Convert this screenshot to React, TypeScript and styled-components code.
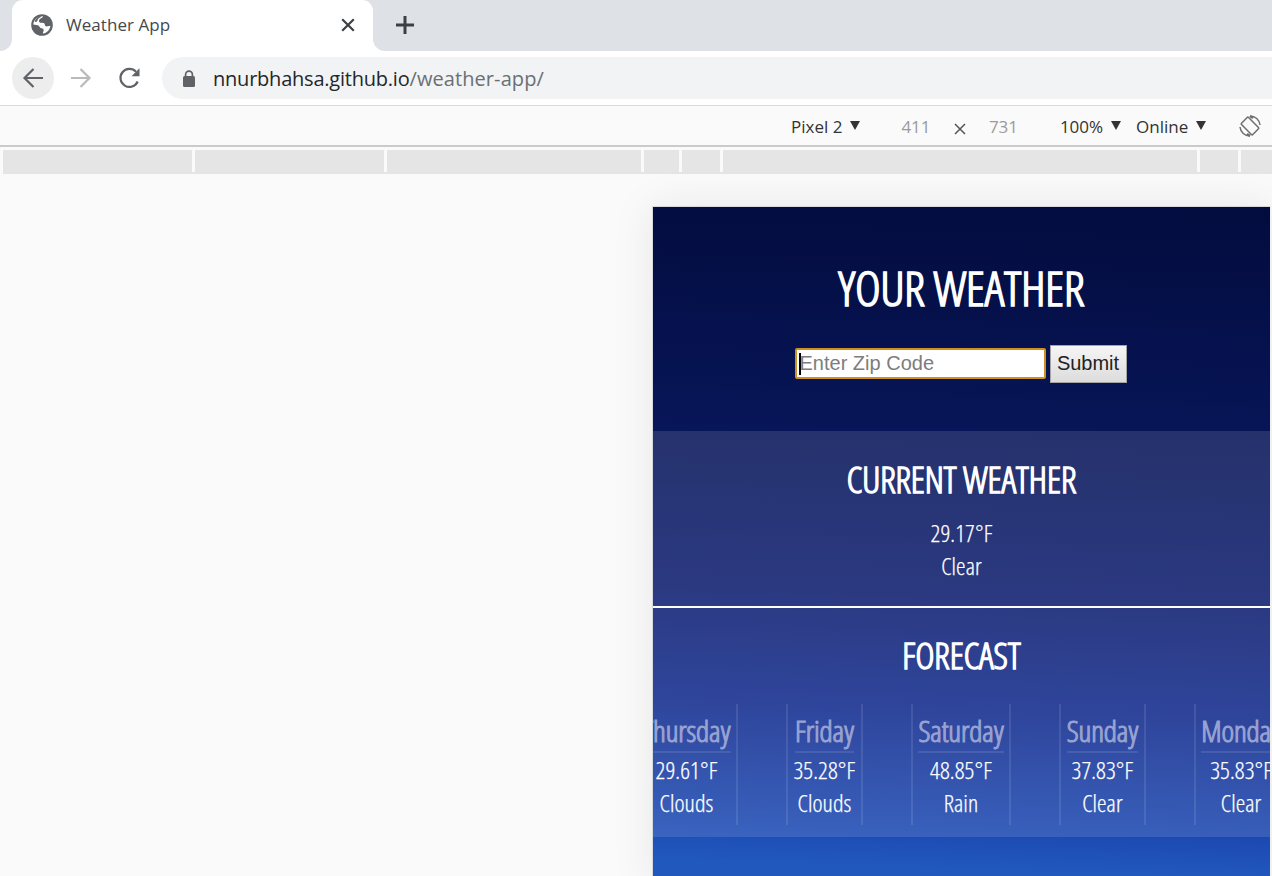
import React from "react";
import styled, { createGlobalStyle } from "styled-components";

const GlobalStyle = createGlobalStyle`
  * { box-sizing: border-box; }
  body {
    margin: 0;
    overflow: hidden;
    background: #fafafa;
    font-family: "Open Sans", "Noto Sans", sans-serif;
  }
`;

const Browser = styled.div`
  display: flex;
  flex-direction: column;
  width: 1272px;
  height: 876px;
  overflow: hidden;
`;

const TabStrip = styled.div`
  display: flex;
  height: 51px;
  background: #fff;
`;

const StripStart = styled.div`
  width: 12px;
  background: #dee1e6;
  border-bottom-right-radius: 12px;
`;

const TabSlot = styled.div`
  width: 361px;
  background: #dee1e6;
  height: 40px;
`;

const Tab = styled.div`
  display: flex;
  align-items: center;
  height: 51px;
  padding: 0 17px 2px 18px;
  background: #fff;
  border-radius: 11px 11px 0 0;
`;

const TabTitle = styled.span`
  flex: 1;
  margin-left: 12px;
  font-size: 17px;
  line-height: 24px;
  letter-spacing: 0.05px;
  color: #45494d;
`;

const StripRest = styled.div`
  flex: 1;
  display: flex;
  align-items: center;
  padding: 0 0 2px 22px;
  background: #dee1e6;
  border-bottom-left-radius: 12px;
`;

const Toolbar = styled.div`
  display: flex;
  align-items: center;
  height: 55px;
  padding-left: 12px;
  background: #fff;
  border-bottom: 1px solid #d9dbde;
`;

const NavButton = styled.div<{ $active?: boolean }>`
  display: flex;
  align-items: center;
  justify-content: center;
  width: 42px;
  height: 42px;
  margin-right: 6px;
  border-radius: 50%;
  background: ${(p) => (p.$active ? "#ededed" : "transparent")};
`;

const AddressBar = styled.div`
  flex: 1;
  display: flex;
  align-items: center;
  height: 42px;
  margin-left: 6px;
  padding: 2px 0 0 20px;
  background: #f1f3f4;
  border-radius: 21px 0 0 21px;
`;

const Url = styled.div`
  margin-left: 17px;
  font-size: 20px;
  line-height: 28px;
  letter-spacing: 0.08px;
  color: #6b6f74;
`;

const Host = styled.span`
  color: #24272b;
  letter-spacing: -0.22px;
`;

const DeviceBar = styled.div`
  display: flex;
  align-items: center;
  height: 41px;
  padding: 2px 11px 0 791px;
  background: #fafafa;
  border-bottom: 2px solid #cbcbcb;
  font-size: 17px;
  line-height: 24px;
  color: #333;
`;

const Picker = styled.div<{ $before?: number; $after?: number }>`
  display: flex;
  align-items: center;
  margin-left: ${(p) => p.$before ?? 0}px;
  margin-right: ${(p) => p.$after ?? 0}px;
  white-space: nowrap;
`;

const Triangle = styled.i`
  margin: -3px 0 0 8px;
  border: solid transparent;
  border-width: 9.5px 5.5px 0;
  border-top-color: #333;
`;

const Dimension = styled.span`
  width: 29px;
  color: #9b9b9b;
`;

const Times = styled.span`
  display: flex;
  justify-content: center;
  width: 58.5px;
  padding-top: 4px;
`;

const RotateSlot = styled.div`
  display: flex;
  margin: -2px 0 0 auto;
`;

const Ruler = styled.div`
  display: flex;
  height: 24px;
  margin: 3px 0 0 3px;
  background: #e5e5e5;
`;

const RulerBlock = styled.div<{ $width: number }>`
  flex: none;
  width: ${(p) => p.$width}px;
  height: 22px;
  border-right: 3px solid #fafafa;
`;

const Stage = styled.main`
  flex: 1;
  padding: 32px 0 0 652px;
  min-height: 0;
`;

const Phone = styled.div`
  width: 619px;
  height: 680px;
  border: 1px solid #d5d8dc;
  border-right-color: #eef0f2;
  overflow: hidden;
  color: #fff;
  text-align: center;
  background: linear-gradient(182deg, #030c3e 0, #071557 224px, #0e1e70 400px, #132d90 520px, #1c48b0 628px, #2158be 672px);
  box-shadow: 0 0 40px rgba(0, 0, 0, 0.08);
  font-family: "Open Sans", sans-serif;
  font-stretch: 75%;
  font-weight: 300;
`;

const Header = styled.header`
  height: 224px;
  padding-top: 51px;
`;

const Title = styled.h1`
  margin: 0;
  font-size: 48px;
  line-height: 60px;
  font-weight: 300;
  -webkit-text-stroke: 1.7px #fff;
`;

const ZipForm = styled.form`
  display: flex;
  justify-content: center;
  align-items: flex-start;
  gap: 4px;
  margin: 27px 2px 0 0;
`;

const Field = styled.div`
  position: relative;
  display: flex;
  margin-top: 3px;
`;

const ZipInput = styled.input`
  width: 251px;
  height: 31px;
  padding: 0 0 0 3px;
  border: 2px solid #cf9020;
  border-radius: 2px;
  outline: none;
  background: #fff;
  font: 20px "Liberation Sans", Arial, sans-serif;
  &::placeholder { color: #7d7d7d; opacity: 1; }
`;

const Caret = styled.span`
  position: absolute;
  left: 4px;
  top: 5px;
  width: 2px;
  height: 22px;
  background: #000;
`;

const SubmitButton = styled.button`
  width: 77px;
  height: 38px;
  padding: 0 0 2px;
  border: 1px solid #a5a5a5;
  background: linear-gradient(#f6f6f6, #dcdcdc);
  color: #222;
  font: 20px "Liberation Sans", Arial, sans-serif;
`;

const Current = styled.section`
  height: 177px;
  padding-top: 24px;
  background: rgba(255, 255, 255, 0.12);
  background-clip: padding-box;
  border-bottom: 2px solid #fff;
`;

const Heading = styled.h2`
  margin: 0;
  font-size: 36px;
  line-height: 50px;
  font-weight: 300;
  -webkit-text-stroke: 1.4px #fff;
`;

const Reading = styled.p`
  margin: 0;
  font-size: 24px;
  line-height: 33px;
  letter-spacing: 0.1px;
  -webkit-text-stroke: 0.25px #fff;
`;

const CurrentReadings = styled.div`
  margin-top: 11px;
`;

const Forecast = styled.section`
  height: 229px;
  padding-top: 23px;
  background: rgba(255, 255, 255, 0.12);
`;

const Days = styled.div`
  display: flex;
  gap: 48px;
  margin: 23px 0 0 -18px;
`;

const Day = styled.div`
  flex: none;
  height: 121px;
  padding: 6px 5.5px;
  border: solid rgba(255, 255, 255, 0.1);
  border-width: 0 2px;
`;

const DayName = styled.h3`
  width: fit-content;
  margin: 0 auto;
  border-bottom: 2px solid rgba(255, 255, 255, 0.1);
  font-size: 30px;
  line-height: 41px;
  letter-spacing: -0.12px;
  font-weight: 300;
  color: #98a2d2;
  -webkit-text-stroke: 1.1px #98a2d2;
`;

const days = [
  { name: "Thursday", temp: "29.61", sky: "Clouds" },
  { name: "Friday", temp: "35.28", sky: "Clouds" },
  { name: "Saturday", temp: "48.85", sky: "Rain" },
  { name: "Sunday", temp: "37.83", sky: "Clear" },
  { name: "Monday", temp: "35.83", sky: "Clear" },
];

const rulerBlocks = [192, 192, 257, 38, 41, 477, 41];

const Globe = () => (
  <svg width="24" height="24" viewBox="0 0 24 24">
    <circle cx="12" cy="12" r="10.8" fill="#5f6368" />
    <path
      d="M13 3.2C12.500 5.400 9.500 5.200 9 7.400c-.3 1.500 1 2.400 2.600 2.300 2.300-.1 3.200.8 3.300 2.300.2 1.500 1.500 1.600 3 1.300l2.500-.6c-.4 3.900-3.400 7.200-7.300 7.900-.6-1.400.5-2 .6-3.200.1-1.700-1-2.100-2.400-2.200-1.900-.1-1.700-2.500-3.500-2.900L3.300 11.600C3.500 6.600 8 2.900 13 3.200z"
      fill="#fff"
    />
    <path d="M4.500 8.500C6 5.200 9 3.300 11.500 3.100 10.500 5 7.800 5.300 7.400 7.600c-.2 1.500-1.500 1.700-2.900.9zM3.200 13.800l3.200 1c2 .6 1.700 3.400 4.100 3.600v2.600c-3.700-.5-6.700-3.500-7.300-7.200z" fill="#5f6368" />
  </svg>
);

const Close = () => (
  <svg width="16" height="16" viewBox="0 0 16 16">
    <path d="M2.200 2.200l11.600 11.600M13.800 2.200L2.200 13.800" stroke="#3c4043" strokeWidth="2.200" />
  </svg>
);

const Plus = () => (
  <svg width="20" height="20" viewBox="0 0 20 20">
    <path d="M10 1v18M1 10h18" stroke="#3c4043" strokeWidth="3" />
  </svg>
);

const Arrow = ({ color, flip }: { color: string; flip?: boolean }) => (
  <svg width="22" height="22" viewBox="0 0 22 22">
    <path
      d={flip ? "M1 11h18M10.500 2l9 9-9 9" : "M21 11H3M11.500 2l-9 9 9 9"}
      fill="none"
      stroke={color}
      strokeWidth="2.200"
    />
  </svg>
);

const Reload = () => (
  <svg width="22" height="22" viewBox="0 0 22 22">
    <path d="M19.700 14.500A9 9 0 1 1 18 4.700" fill="none" stroke="#5f6368" strokeWidth="2.200" />
    <path d="M21.500 1.200v8h-8z" fill="#5f6368" />
  </svg>
);

const Lock = () => (
  <svg width="14" height="18" viewBox="0 0 14 18">
    <rect x="1" y="6" width="12" height="11" rx="1.500" fill="#5f6368" />
    <path d="M3.600 7V4.500a3.400 3.400 0 0 1 6.800 0V7" fill="none" stroke="#5f6368" strokeWidth="1.700" />
  </svg>
);

const Cross = () => (
  <svg width="12" height="12" viewBox="0 0 12 12">
    <path d="M1 1l10 10M11 1L1 11" stroke="#555" strokeWidth="1.500" />
  </svg>
);

const Rotate = () => (
  <svg width="22" height="22" viewBox="0 0 22 22" fill="none" stroke="#6e6e6e" strokeWidth="1.500">
    <rect x="6" y="3" width="10" height="16" rx="1" transform="rotate(-45 11 11)" />
    <path d="M11 1a10 10 0 0 1 10 9M11 21a10 10 0 0 1-10-9" />
    <path d="M11 1l3 2.200M11 21l-3-2.200" strokeWidth="2.200" />
  </svg>
);

export default function App() {
  return (
    <Browser>
      <GlobalStyle />
      <TabStrip>
        <StripStart />
        <TabSlot>
          <Tab>
            <Globe />
            <TabTitle>Weather App</TabTitle>
            <Close />
          </Tab>
        </TabSlot>
        <StripRest>
          <Plus />
        </StripRest>
      </TabStrip>
      <Toolbar>
        <NavButton $active>
          <Arrow color="#5f6368" />
        </NavButton>
        <NavButton>
          <Arrow color="#bababa" flip />
        </NavButton>
        <NavButton>
          <Reload />
        </NavButton>
        <AddressBar>
          <Lock />
          <Url>
            <Host>nnurbhahsa.github.io</Host>/weather-app/
          </Url>
        </AddressBar>
      </Toolbar>
      <DeviceBar>
        <Picker $after={41}>
          Pixel 2 <Triangle />
        </Picker>
        <Dimension>411</Dimension>
        <Times>
          <Cross />
        </Times>
        <Dimension>731</Dimension>
        <Picker $before={42} $after={15}>
          100% <Triangle />
        </Picker>
        <Picker>
          Online <Triangle />
        </Picker>
        <RotateSlot>
          <Rotate />
        </RotateSlot>
      </DeviceBar>
      <Ruler>
        {rulerBlocks.map((width, i) => (
          <RulerBlock key={i} $width={width} />
        ))}
      </Ruler>
      <Stage>
        <Phone>
          <Header>
            <Title>YOUR WEATHER</Title>
            <ZipForm>
              <Field>
                <ZipInput placeholder="Enter Zip Code" />
                <Caret />
              </Field>
              <SubmitButton type="button">Submit</SubmitButton>
            </ZipForm>
          </Header>
          <Current>
            <Heading>CURRENT WEATHER</Heading>
            <CurrentReadings>
              <Reading>29.17°F</Reading>
              <Reading>Clear</Reading>
            </CurrentReadings>
          </Current>
          <Forecast>
            <Heading>FORECAST</Heading>
            <Days>
              {days.map((day) => (
                <Day key={day.name}>
                  <DayName>{day.name}</DayName>
                  <Reading>{day.temp}°F</Reading>
                  <Reading>{day.sky}</Reading>
                </Day>
              ))}
            </Days>
          </Forecast>
        </Phone>
      </Stage>
    </Browser>
  );
}
